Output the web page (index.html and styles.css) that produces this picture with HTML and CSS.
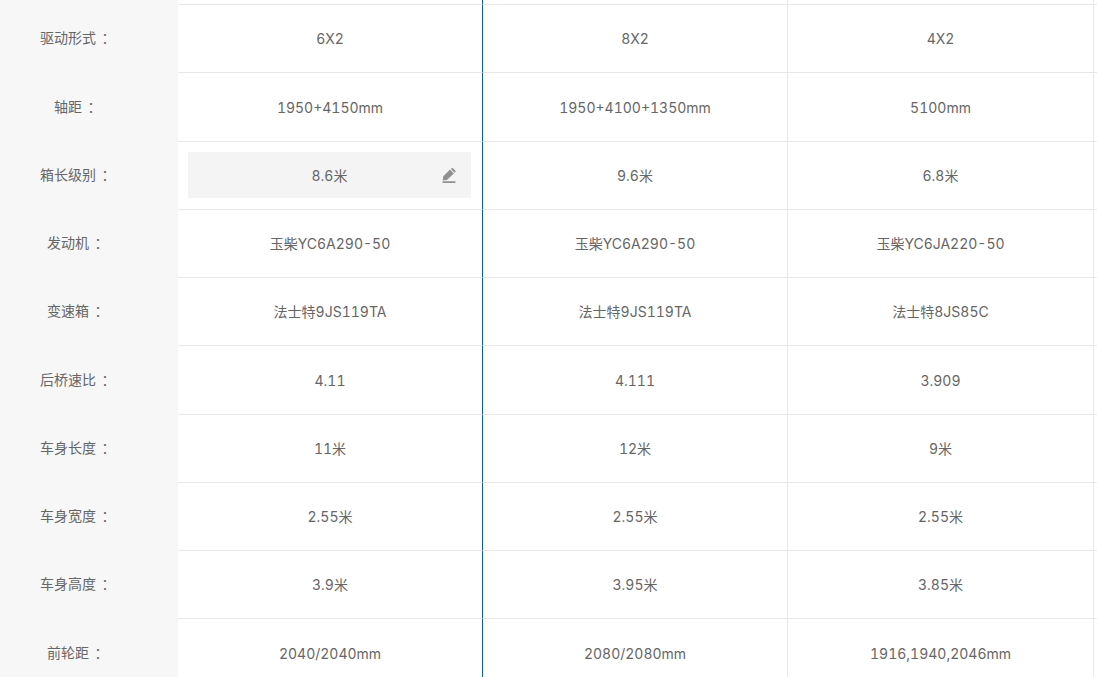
FILE: index.html
```html
<!DOCTYPE html>
<html lang="zh-CN">
<head>
<meta charset="utf-8">
<title>参数对比</title>
<link rel="stylesheet" href="styles.css">
</head>
<body>
<div class="table">
  <div class="row spacer"><div class="label"></div><div class="cell first"></div><div class="cell"></div><div class="cell"></div></div>
  <div class="row"><div class="label">驱动形式<span class="colon">：</span></div><div class="cell first">6X2</div><div class="cell">8X2</div><div class="cell">4X2</div></div>
  <div class="row"><div class="label">轴距<span class="colon">：</span></div><div class="cell first">1950+4150mm</div><div class="cell">1950+4100+1350mm</div><div class="cell">5100mm</div></div>
  <div class="row"><div class="label">箱长级别<span class="colon">：</span></div><div class="cell first"><div class="hovered">8.6米<svg class="pencil" viewBox="0 0 14 15" width="14" height="15"><path d="M.6 13.2h12.8v2H.6zM.8 12.4l.4-4L8 1.6l3.8 3.8-6.9 6.7zM8.9 .9l.9-.7c.3-.3.8-.3 1.1 0l2.6 2.5c.3.3.3.8 0 1.1l-.9 .9z"/></svg></div></div><div class="cell">9.6米</div><div class="cell">6.8米</div></div>
  <div class="row"><div class="label">发动机<span class="colon">：</span></div><div class="cell first">玉柴YC6A290-50</div><div class="cell">玉柴YC6A290-50</div><div class="cell">玉柴YC6JA220-50</div></div>
  <div class="row"><div class="label">变速箱<span class="colon">：</span></div><div class="cell first">法士特9JS119TA</div><div class="cell">法士特9JS119TA</div><div class="cell">法士特8JS85C</div></div>
  <div class="row"><div class="label">后桥速比<span class="colon">：</span></div><div class="cell first">4.11</div><div class="cell">4.111</div><div class="cell">3.909</div></div>
  <div class="row"><div class="label">车身长度<span class="colon">：</span></div><div class="cell first">11米</div><div class="cell">12米</div><div class="cell">9米</div></div>
  <div class="row"><div class="label">车身宽度<span class="colon">：</span></div><div class="cell first">2.55米</div><div class="cell">2.55米</div><div class="cell">2.55米</div></div>
  <div class="row"><div class="label">车身高度<span class="colon">：</span></div><div class="cell first">3.9米</div><div class="cell">3.95米</div><div class="cell">3.85米</div></div>
  <div class="row"><div class="label">前轮距<span class="colon">：</span></div><div class="cell first">2040/2040mm</div><div class="cell">2080/2080mm</div><div class="cell">1916,1940,2046mm</div></div>
</div>
</body>
</html>
```
FILE: styles.css
```css
html, body {
  margin: 0;
  height: 100%;
  overflow: hidden;
  background: #fff;
}
.table {
  font: 14px/20px Inter, "Noto Sans CJK SC", sans-serif;
  font-variant-numeric: tabular-nums;
  color: #666;
}
.row {
  display: grid;
  grid-template-columns: 178px 305px 305px 306px 1fr;
  height: 68.25px;
}
.row::after {
  content: "";
  border-top: 1px solid #e8e8e8;
}
.row.spacer {
  height: 4.2px;
}
.row.spacer::after {
  border-top: 0;
}
.label {
  background: #f7f7f7;
  display: flex;
  align-items: center;
  justify-content: center;
  padding-right: 26px;
}
.colon {
  margin-left: 2px;
  font-family: "Noto Sans CJK TC", sans-serif;
}
.cell {
  display: flex;
  align-items: center;
  justify-content: center;
  padding-top: 1px;
  border-top: 1px solid #e8e8e8;
  border-right: 1px solid #e8e8e8;
  box-sizing: border-box;
}
.spacer .cell {
  border-top: 0;
  padding-top: 0;
}
.cell.first {
  border-right-color: #0a5fa0;
}
.hovered {
  position: relative;
  flex: 1;
  margin: -1px 11px 0 10px;
  height: 46px;
  background: #f4f4f4;
  display: flex;
  align-items: center;
  justify-content: center;
  padding-top: 1px;
  box-sizing: border-box;
}
.pencil {
  position: absolute;
  right: 15px;
  top: 16px;
  fill: #909090;
}
```
